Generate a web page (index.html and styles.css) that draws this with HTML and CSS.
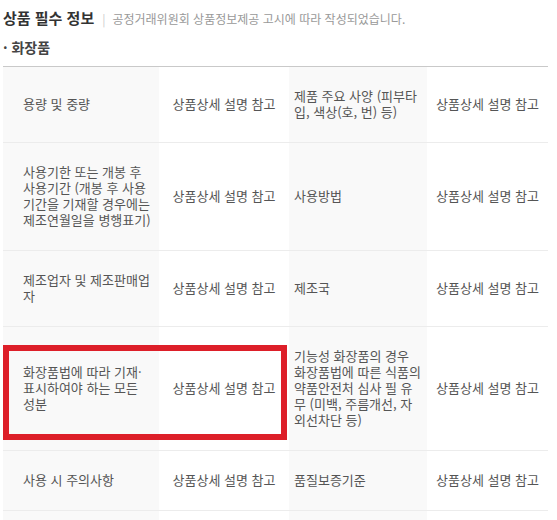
FILE: index.html
```html
<!DOCTYPE html>
<html lang="ko">
<head>
<meta charset="utf-8">
<title>상품 필수 정보</title>
<link rel="stylesheet" href="styles.css">
</head>
<body>
<div class="wrap">
  <div class="head">
    <h2 class="title">상품 필수 정보</h2>
    <span class="sep">|</span>
    <span class="desc">공정거래위원회 상품정보제공 고시에 따라 작성되었습니다.</span>
  </div>
  <h3 class="cat">· 화장품</h3>
  <table class="info">
    <colgroup>
      <col class="c1"><col class="c2"><col class="c3"><col class="c4">
    </colgroup>
    <tbody>
      <tr>
        <th>용량 및 중량</th>
        <td>상품상세 설명 참고</td>
        <th class="k2">제품 주요 사양 (피부타입, 색상(호, 번) 등)</th>
        <td>상품상세 설명 참고</td>
      </tr>
      <tr>
        <th>사용기한 또는 개봉 후 사용기간 (개봉 후 사용기간을 기재할 경우에는 제조연월일을 병행표기)</th>
        <td>상품상세 설명 참고</td>
        <th class="k2">사용방법</th>
        <td>상품상세 설명 참고</td>
      </tr>
      <tr>
        <th>제조업자 및 제조판매업자</th>
        <td>상품상세 설명 참고</td>
        <th class="k2">제조국</th>
        <td>상품상세 설명 참고</td>
      </tr>
      <tr>
        <th class="marked">화장품법에 따라 기재·표시하여야 하는 모든 성분<div class="redbox"></div></th>
        <td>상품상세 설명 참고</td>
        <th class="k2">기능성 화장품의 경우 화장품법에 따른 식품의약품안전처 심사 필 유무 (미백, 주름개선, 자외선차단 등)</th>
        <td>상품상세 설명 참고</td>
      </tr>
      <tr>
        <th>사용 시 주의사항</th>
        <td>상품상세 설명 참고</td>
        <th class="k2">품질보증기준</th>
        <td>상품상세 설명 참고</td>
      </tr>
      <tr class="next">
        <th></th>
        <td></td>
        <th class="k2"></th>
        <td></td>
      </tr>
    </tbody>
  </table>
</div>
</body>
</html>
```

FILE: styles.css
```css
html, body {
  margin: 0;
  padding: 0;
  background: #fff;
}
body {
  font-family: "Noto Sans CJK KR", "Noto Sans", sans-serif;
  color: #555;
}
.wrap {
  padding-left: 3px;
  width: 545px;
}
.head {
  display: flex;
  align-items: baseline;
  margin-top: 8px;
  height: 20px;
  line-height: 20px;
}
.title {
  margin: 0;
  font-size: 15px;
  font-weight: 700;
  color: #333;
}
.sep {
  font-size: 12px;
  color: #ccc;
  margin: 0 7px 0 8px;
}
.desc {
  font-size: 12px;
  color: #999;
}
.cat {
  margin: 9px 0 9px 0;
  height: 20px;
  line-height: 20px;
  font-size: 14px;
  font-weight: 700;
  color: #444;
}
.info {
  width: 545px;
  table-layout: fixed;
  border-collapse: collapse;
  border-top: 1px solid #c9c9c9;
  font-size: 13px;
  line-height: 16px;
}
.c1 { width: 156px; }
.c2 { width: 130px; }
.c3 { width: 138px; }
.c4 { width: 121px; }
.info th,
.info td {
  border-bottom: 1px solid #ececec;
  vertical-align: middle;
  font-weight: 400;
  color: #555;
  padding-top: 21px;
  padding-bottom: 22px;
}
.info th {
  background: #f9f9f9;
  text-align: left;
  padding-left: 20px;
  padding-right: 6px;
}
.info th.k2 {
  padding-left: 5px;
  padding-right: 6px;
}
.info td {
  background: #fff;
  text-align: center;
  padding-left: 0;
  padding-right: 0;
}
.info .next th,
.info .next td {
  height: 16px;
}
.marked {
  position: relative;
}
.redbox {
  position: absolute;
  left: 0;
  top: 18px;
  width: 284px;
  height: 95px;
  box-sizing: border-box;
  border: 6px solid #dd1f29;
}
```
